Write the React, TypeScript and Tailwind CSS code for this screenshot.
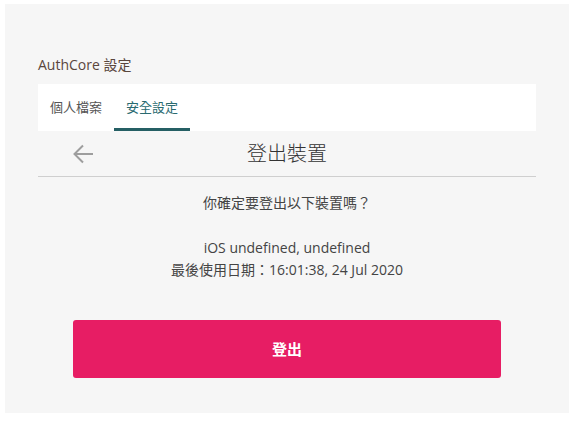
export default function App() {
  const font = { fontFamily: "'Open Sans', 'Noto Sans CJK TC', sans-serif" };

  return (
    <div className="min-h-screen bg-white pt-[4px] px-[5px]" style={font}>
      <div className="h-[409px] bg-[#f6f6f6] px-[33px] pt-[51px]">
        {/* Page heading */}
        <h1 className="text-[14px] leading-[20px] text-[#5a463d]">AuthCore 設定</h1>

        {/* Tabs */}
        <nav className="mt-[9px] flex h-[47px] bg-white">
          <button className="flex items-center border-y-[3px] border-transparent px-3 text-[13px] text-[#555]">
            個人檔案
          </button>
          <button className="flex items-center border-y-[3px] border-t-transparent border-b-[#255f64] px-3 text-[13px] text-[#2a6a70]">
            安全設定
          </button>
        </nav>

        {/* Header */}
        <div className="flex h-[46px] items-center border-b border-[#cfcfcf]">
          <div className="flex w-[55px] pl-[35px]">
            <svg width="20" height="20" viewBox="0 0 20 20" fill="none" stroke="#9e9e9e" strokeWidth="2">
              <path d="M20 10H2" />
              <path d="M10 1.5 1.5 10l8.5 8.5" />
            </svg>
          </div>
          <h2 className="flex-1 text-center text-[20px] font-light leading-[26px] text-[#333]">登出裝置</h2>
          <div className="w-[55px]" />
        </div>

        {/* Body */}
        <p className="mt-[15px] text-center text-[14px] leading-[22px] text-[#444]">你確定要登出以下裝置嗎？</p>
        <div className="mt-[23px] text-center text-[14px] leading-[22px] text-[#444]">
          <p>iOS undefined, undefined</p>
          <p>最後使用日期：16:01:38, 24 Jul 2020</p>
        </div>

        <div className="mt-[39px] px-[35px]">
          <button className="flex h-[58px] w-full items-center justify-center rounded-[3px] bg-[#e71d64] text-[15px] font-bold text-white">
            登出
          </button>
        </div>
      </div>
    </div>
  );
}
